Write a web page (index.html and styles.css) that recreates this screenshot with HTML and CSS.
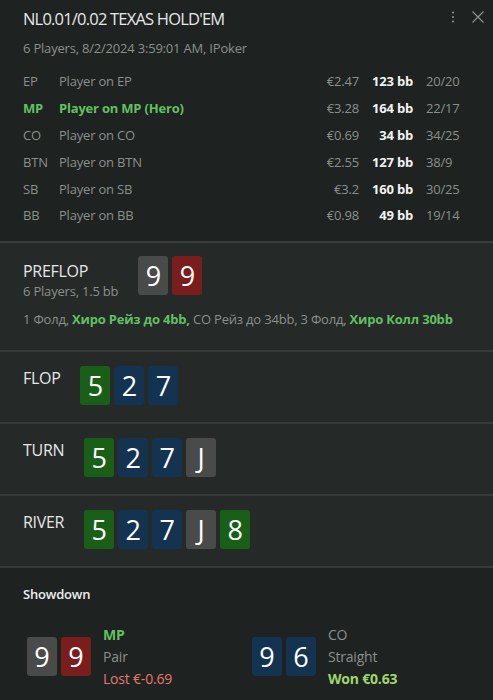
FILE: index.html
```html
<!DOCTYPE html>
<html lang="en">
<head>
  <meta charset="UTF-8">
  <meta name="viewport" content="width=device-width, initial-scale=1.0">
  <title>Hand Replay</title>
  <link rel="stylesheet" href="styles.css">
</head>
<body>
  <div class="hand">
    <div class="hand-head">
      <div class="head-top">
        <h1>NL0.01/0.02 TEXAS HOLD'EM</h1>
        <div class="head-icons">
          <svg width="4" height="12" viewBox="0 0 4 12"><circle cx="2" cy="1.5" r="1.1" fill="#8b908d"/><circle cx="2" cy="6" r="1.1" fill="#8b908d"/><circle cx="2" cy="10.5" r="1.1" fill="#8b908d"/></svg>
          <svg width="12" height="12" viewBox="0 0 12 12"><path d="M0.5 0.5 L11.5 11.5 M11.5 0.5 L0.5 11.5" stroke="#8b908d" stroke-width="1.2"/></svg>
        </div>
      </div>
      <p class="sub">6 Players, 8/2/2024 3:59:01 AM, IPoker</p>

      <div class="players">
        <div class="row"><span>EP</span><span>Player on EP</span><span class="amt">€2.47</span><span class="bb">123 bb</span><span>20/20</span></div>
        <div class="row hero"><span>MP</span><span>Player on MP (Hero)</span><span class="amt">€3.28</span><span class="bb">164 bb</span><span>22/17</span></div>
        <div class="row"><span>CO</span><span>Player on CO</span><span class="amt">€0.69</span><span class="bb">34 bb</span><span>34/25</span></div>
        <div class="row"><span>BTN</span><span>Player on BTN</span><span class="amt">€2.55</span><span class="bb">127 bb</span><span>38/9</span></div>
        <div class="row"><span>SB</span><span>Player on SB</span><span class="amt">€3.2</span><span class="bb">160 bb</span><span>30/25</span></div>
        <div class="row"><span>BB</span><span>Player on BB</span><span class="amt">€0.98</span><span class="bb">49 bb</span><span>19/14</span></div>
      </div>
    </div>

    <div class="street preflop">
      <div class="street-row">
        <div class="street-label">
          <h2>PREFLOP</h2>
          <p class="sub">6 Players, 1.5 bb</p>
        </div>
        <div class="cards">
          <span class="card gray">9</span><span class="card red">9</span>
        </div>
      </div>
      <p class="actions">1 Фолд, <b>Хиро Рейз до 4bb,</b> CO Рейз до 34bb, 3 Фолд, <b>Хиро Колл 30bb</b></p>
    </div>

    <div class="street">
      <div class="street-row">
        <h2 class="street-label">FLOP</h2>
        <div class="cards">
          <span class="card green">5</span><span class="card blue">2</span><span class="card blue">7</span>
        </div>
      </div>
    </div>

    <div class="street">
      <div class="street-row">
        <h2 class="street-label">TURN</h2>
        <div class="cards">
          <span class="card green">5</span><span class="card blue">2</span><span class="card blue">7</span><span class="card gray">J</span>
        </div>
      </div>
    </div>

    <div class="street">
      <div class="street-row">
        <h2 class="street-label">RIVER</h2>
        <div class="cards">
          <span class="card green">5</span><span class="card blue">2</span><span class="card blue">7</span><span class="card gray">J</span><span class="card green">8</span>
        </div>
      </div>
    </div>

    <div class="showdown">
      <h3>Showdown</h3>
      <div class="results">
        <div class="result">
          <div class="cards">
            <span class="card gray">9</span><span class="card red">9</span>
          </div>
          <div class="result-info">
            <span class="who hero-name">MP</span>
            <span>Pair</span>
            <span class="lost">Lost €-0.69</span>
          </div>
        </div>
        <div class="result">
          <div class="cards">
            <span class="card blue">9</span><span class="card blue">6</span>
          </div>
          <div class="result-info">
            <span class="who">CO</span>
            <span>Straight</span>
            <span class="won">Won €0.63</span>
          </div>
        </div>
      </div>
    </div>
  </div>
</body>
</html>
```

FILE: styles.css
```css
* {
  margin: 0;
  padding: 0;
  box-sizing: border-box;
}

body {
  font-family: "Open Sans", "Noto Sans", sans-serif;
  background: #1e2220;
  color: #8b908d;
  font-size: 13px;
}

.hand {
  width: 493px;
  min-height: 700px;
  background: #1e2220;
}

.hand-head {
  padding: 6px 0 12px 23px;
}

.head-top {
  display: flex;
  justify-content: space-between;
  align-items: center;
}

.head-top h1 {
  font-size: 16.5px;
  font-weight: 400;
  color: #e6e8e7;
  line-height: 26px;
  letter-spacing: -0.8px;
}

.head-icons {
  display: flex;
  align-items: center;
  gap: 17px;
  padding-right: 9px;
  margin-top: -4px;
}

.sub {
  font-size: 13px;
  color: #8b908d;
  line-height: 20px;
  letter-spacing: -0.2px;
}

.hand-head > .sub {
  margin-top: 6px;
}

.players {
  margin-top: 10px;
}

.row {
  display: grid;
  grid-template-columns: 36px 1fr 60px 54px 67px;
  height: 26.8px;
  align-items: center;
  letter-spacing: -0.2px;
}

.row .amt,
.row .bb {
  text-align: right;
  padding-right: 13px;
}

.row .bb {
  color: #f2f3f2;
  font-weight: 700;
}

.row.hero span:nth-child(1),
.row.hero span:nth-child(2) {
  color: #62c062;
  font-weight: 700;
}

.street {
  background: #252927;
  border-top: 2px solid #373b39;
  padding: 14px 0 17px 23px;
}

.street-row {
  display: flex;
  align-items: flex-start;
  gap: 20px;
}

.street h2 {
  font-size: 16px;
  font-weight: 400;
  color: #e6e8e7;
  line-height: 24px;
  letter-spacing: -0.3px;
}

.preflop {
  padding-top: 13px;
  padding-bottom: 21px;
}

.preflop .street-label {
  padding-top: 3px;
}

.preflop .street-label .sub {
  margin-top: -2px;
}

.actions {
  margin-top: 8px;
  line-height: 20px;
  letter-spacing: -0.2px;
}

.actions b {
  color: #62c062;
}

.cards {
  display: flex;
  gap: 4px;
}

.card {
  width: 30px;
  height: 39px;
  border-radius: 3px;
  color: #fff;
  font-size: 27px;
  line-height: 39px;
  text-align: center;
}

.card.gray { background: #494a4a; }
.card.red { background: #7a1d1d; }
.card.green { background: #195f17; }
.card.blue { background: #133350; }

.showdown {
  background: #1e2220;
  border-top: 2px solid #373b39;
  padding: 16px 0 20px 23px;
}

.showdown h3 {
  font-size: 13px;
  font-weight: 600;
  color: #eceeed;
  line-height: 20px;
  letter-spacing: -0.2px;
}

.results {
  display: grid;
  grid-template-columns: 225px 1fr;
  margin-top: 20px;
  padding-left: 4px;
}

.result {
  display: flex;
  align-items: center;
  gap: 12px;
}

.result-info {
  display: flex;
  flex-direction: column;
  font-size: 14px;
  line-height: 22px;
  letter-spacing: -0.2px;
}

.result-info .hero-name {
  color: #62c062;
  font-weight: 700;
}

.lost {
  color: #e57a6a;
}

.won {
  color: #9ed86c;
  font-weight: 700;
}
```
